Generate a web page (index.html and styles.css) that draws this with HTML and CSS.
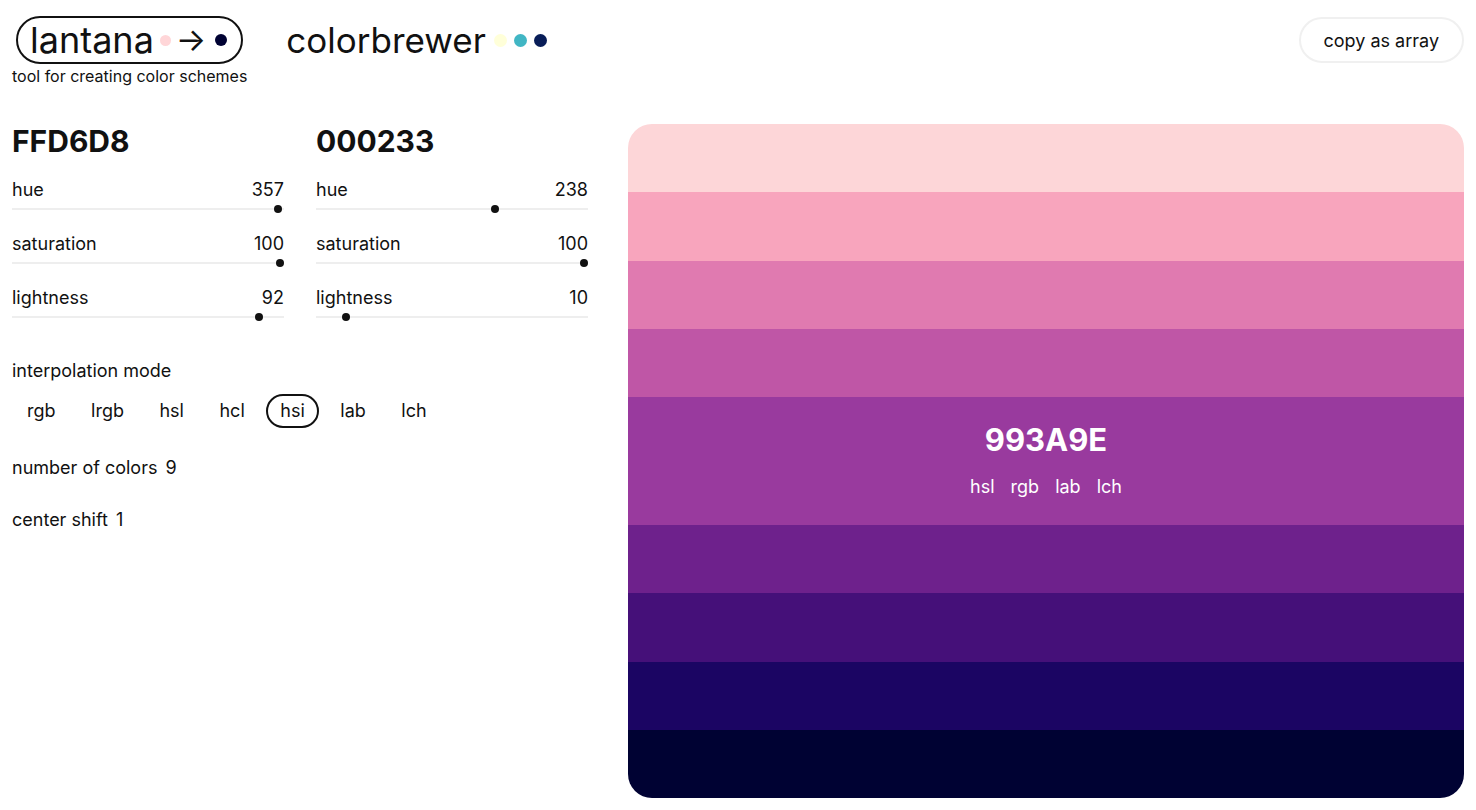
FILE: index.html
```html
<!DOCTYPE html>
<html lang="en">
<head>
<meta charset="utf-8">
<title>lantana</title>
<link rel="stylesheet" href="styles.css">
</head>
<body>
<header class="topbar">
  <div class="brand">
    <div class="logo-wrap">
      <a class="logo" href="#">lantana<span class="dot dot-pink"></span><span class="arrow">→</span><span class="dot dot-navy"></span></a>
      <div class="tagline">tool for creating color schemes</div>
    </div>
    <a class="other-link" href="#">colorbrewer<span class="dots"><span class="dot dot-yellow"></span><span class="dot dot-teal"></span><span class="dot dot-blue"></span></span></a>
  </div>
  <button class="copy-btn">copy as array</button>
</header>

<main class="main">
  <section class="controls">
    <div class="editors">
      <div class="editor">
        <h2 class="hex">FFD6D8</h2>
        <div class="slider">
          <div class="slider-label"><span>hue</span><span>357</span></div>
          <div class="track"><span class="thumb" style="left: 99.17%"></span></div>
        </div>
        <div class="slider">
          <div class="slider-label"><span>saturation</span><span>100</span></div>
          <div class="track"><span class="thumb" style="left: 100%"></span></div>
        </div>
        <div class="slider">
          <div class="slider-label"><span>lightness</span><span>92</span></div>
          <div class="track"><span class="thumb" style="left: 92%"></span></div>
        </div>
      </div>
      <div class="editor">
        <h2 class="hex">000233</h2>
        <div class="slider">
          <div class="slider-label"><span>hue</span><span>238</span></div>
          <div class="track"><span class="thumb" style="left: 66.1%"></span></div>
        </div>
        <div class="slider">
          <div class="slider-label"><span>saturation</span><span>100</span></div>
          <div class="track"><span class="thumb" style="left: 100%"></span></div>
        </div>
        <div class="slider">
          <div class="slider-label"><span>lightness</span><span>10</span></div>
          <div class="track"><span class="thumb" style="left: 10%"></span></div>
        </div>
      </div>
    </div>

    <div class="field">
      <div class="field-title">interpolation mode</div>
      <div class="modes">
        <button class="mode">rgb</button>
        <button class="mode">lrgb</button>
        <button class="mode">hsl</button>
        <button class="mode">hcl</button>
        <button class="mode active">hsi</button>
        <button class="mode">lab</button>
        <button class="mode">lch</button>
      </div>
    </div>

    <div class="setting"><span>number of colors</span><span>9</span></div>
    <div class="setting"><span>center shift</span><span>1</span></div>
  </section>

  <section class="palette">
    <div class="swatch" style="background:#FDD6D8"></div>
    <div class="swatch" style="background:#F8A5BD"></div>
    <div class="swatch" style="background:#E07AB0"></div>
    <div class="swatch" style="background:#BF56A6"></div>
    <div class="swatch selected" style="background:#993A9E">
      <div class="sel-hex">993A9E</div>
      <div class="sel-formats"><span>hsl</span><span>rgb</span><span>lab</span><span>lch</span></div>
    </div>
    <div class="swatch" style="background:#6E218C"></div>
    <div class="swatch" style="background:#451079"></div>
    <div class="swatch" style="background:#1B0563"></div>
    <div class="swatch" style="background:#000233"></div>
  </section>
</main>
</body>
</html>
```

FILE: styles.css
```css
* { box-sizing: border-box; }

html, body {
  margin: 0;
  background: #fff;
}

body {
  font-family: Inter, "Noto Sans", sans-serif;
  color: #111;
  font-size: 18px;
  padding: 16px 12px 12px 12px;
}

a { color: inherit; text-decoration: none; }

button {
  font-family: inherit;
  color: inherit;
  background: none;
  cursor: pointer;
}

.topbar {
  display: flex;
  justify-content: space-between;
  align-items: flex-start;
  height: 108px;
}

.brand {
  display: flex;
  align-items: flex-start;
  gap: 39px;
}

.logo-wrap {
  display: flex;
  flex-direction: column;
  align-items: flex-start;
}

.logo {
  margin-left: 4px;
  display: inline-flex;
  align-items: center;
  height: 48px;
  padding: 0 14px 0 12px;
  border: 2px solid #111;
  border-radius: 24px;
  font-size: 36px;
  font-weight: 400;
  line-height: 1;
}

.dot {
  display: inline-block;
  width: 11px;
  height: 11px;
  border-radius: 50%;
}

.dot-pink { background: #FFD6D8; margin-left: 6px; }
.dot-navy { background: #000233; width: 12px; height: 12px; }
.arrow { margin: 0 9px 0 5px; font-size: 32px; }

.tagline {
  font-size: 16px;
  line-height: 20px;
  margin-top: 2px;
}

.other-link {
  display: inline-flex;
  align-items: center;
  height: 48px;
  font-size: 35px;
  line-height: 1;
  gap: 8px;
}

.dots {
  display: inline-flex;
  align-items: center;
  gap: 7px;
}

.dots .dot { width: 13px; height: 13px; }
.dot-yellow { background: #FFFFD9; }
.dot-teal { background: #41B6C4; }
.dot-blue { background: #081D58; }

.copy-btn {
  margin-top: 1px;
  height: 46px;
  padding: 0 23px;
  border: 2px solid #f0f0f0;
  border-radius: 23px;
  font-size: 18px;
}

.main {
  display: flex;
  gap: 40px;
  align-items: flex-start;
}

.controls {
  flex: 0 0 576px;
}

.editors {
  display: flex;
  gap: 32px;
}

.editor {
  width: 272px;
}

.hex {
  margin: 0;
  font-size: 30px;
  font-weight: 700;
  line-height: 34px;
  margin-bottom: 20px;
}

.slider {
  height: 54px;
}

.slider-label {
  display: flex;
  justify-content: space-between;
  line-height: 24px;
}

.track {
  position: relative;
  height: 2px;
  margin: 6px 4px 0 4px;
  background: #eee;
  box-shadow: -4px 0 0 #eee, 4px 0 0 #eee;
}

.thumb {
  position: absolute;
  top: 50%;
  width: 8px;
  height: 8px;
  margin: -4px 0 0 -4px;
  border-radius: 50%;
  background: #111;
}

.field {
  margin-top: 19px;
}

.field-title {
  line-height: 24px;
}

.modes {
  display: flex;
  gap: 7.5px;
  margin-top: 11px;
  padding-left: 1px;
}

.mode {
  padding: 5px 12px;
  border: 2px solid transparent;
  border-radius: 18px;
  font-size: 18px;
  line-height: 20px;
}

.mode.active {
  border-color: #111;
}

.setting {
  display: flex;
  gap: 8px;
  line-height: 24px;
  margin-top: 28px;
}

.setting + .setting {
  margin-top: 28px;
}

.palette {
  flex: 1;
  height: 674px;
  display: flex;
  flex-direction: column;
  border-radius: 24px;
  overflow: hidden;
}

.swatch {
  flex: 1 1 0;
}

.swatch.selected {
  flex: 0 0 128px;
  display: flex;
  flex-direction: column;
  align-items: center;
  padding-top: 26px;
  color: #fff;
}

.sel-hex {
  font-size: 31px;
  font-weight: 700;
  line-height: 34px;
}

.sel-formats {
  display: flex;
  gap: 16px;
  margin-top: 19px;
  font-size: 18px;
  line-height: 22px;
}
```
